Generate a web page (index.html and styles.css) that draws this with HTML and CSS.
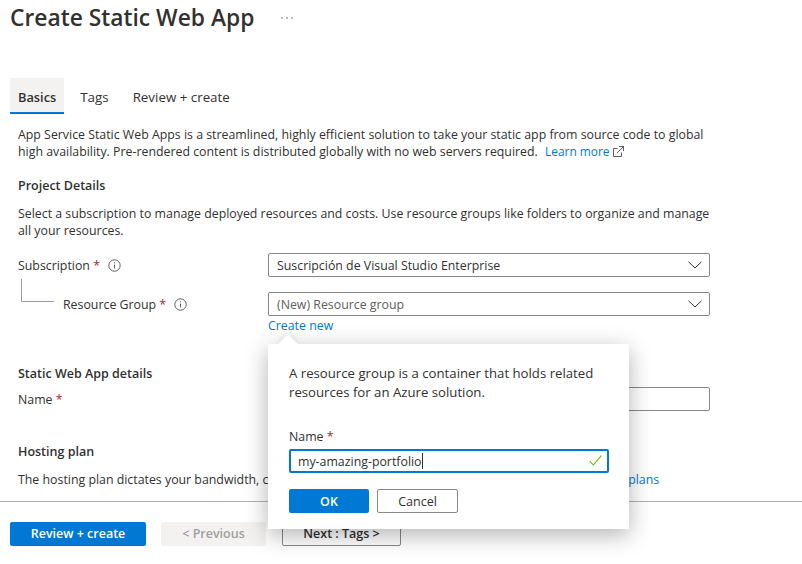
FILE: index.html
```html
<!DOCTYPE html>
<html lang="en">
<head>
    <meta charset="UTF-8">
    <title>Create Static Web App</title>
    <link rel="stylesheet" href="styles.css">
</head>
<body>
    <div class="page">
        <div class="titlebar">
            <h1>Create Static Web App</h1>
            <svg class="more" width="12" height="2" viewBox="0 0 12 2" fill="#605e5c"><circle cx="1" cy="1" r=".8"/><circle cx="6" cy="1" r=".8"/><circle cx="11" cy="1" r=".8"/></svg>
        </div>

        <div class="tabs">
            <div class="tab active">Basics</div>
            <div class="tab">Tags</div>
            <div class="tab">Review + create</div>
        </div>

        <div class="content">
            <p class="intro">App Service Static Web Apps is a streamlined, highly efficient solution to take your static app from source code to global high availability. Pre-rendered content is distributed globally with no web servers required. <a class="link learn" href="#">Learn more</a>
                <svg class="ext" width="11" height="11" viewBox="0 0 11 11" fill="none" stroke="#605e5c" stroke-width="1"><path d="M4.500 2.500H.5v8h8V6.500M6 .5h4.500V5M10.500.5L4 7"/></svg>
            </p>

            <h2 class="h-project">Project Details</h2>
            <p class="desc">Select a subscription to manage deployed resources and costs. Use resource groups like folders to organize and manage all your resources.</p>

            <div class="row row-sub">
                <div class="label">Subscription <span class="req">*</span>
                    <svg class="info" width="13" height="13" viewBox="0 0 13 13" fill="none" stroke="#605e5c"><circle cx="6.5" cy="6.5" r="5.7"/><path d="M6.5 5.6v3.8M6.5 3.4v1"/></svg>
                </div>
                <div class="select">Suscripción de Visual Studio Enterprise
                    <svg class="chev" width="14" height="8" viewBox="0 0 14 8" fill="none" stroke="#323130"><path d="M.5.8L7 7l6.500-6.200"/></svg>
                </div>
            </div>

            <div class="row row-group">
                <div class="label nested">
                    <span class="tree"></span>
                    Resource Group <span class="req">*</span>
                    <svg class="info" width="13" height="13" viewBox="0 0 13 13" fill="none" stroke="#605e5c"><circle cx="6.5" cy="6.5" r="5.700"/><path d="M6.5 5.6v3.8M6.5 3.4v1"/></svg>
                </div>
                <div class="select placeholder">(New) Resource group
                    <svg class="chev" width="14" height="8" viewBox="0 0 14 8" fill="none" stroke="#323130"><path d="M.5.8L7 7l6.500-6.200"/></svg>
                </div>
            </div>
            <div class="create-new"><a class="link" href="#">Create new</a></div>

            <h2 class="h-details">Static Web App details</h2>
            <div class="row row-name">
                <div class="label">Name <span class="req">*</span></div>
                <div class="input"></div>
            </div>

            <h2 class="h-hosting">Hosting plan</h2>
            <p class="hosting">The hosting plan dictates your bandwidth, custom domain, storage, and other capabilities. <a class="link plans" href="#">Compare plans</a></p>
        </div>

        <div class="footer">
            <button class="btn primary wide">Review + create</button>
            <button class="btn disabled">&lt; Previous</button>
            <button class="btn outline next">Next : Tags &gt;</button>
        </div>

        <div class="popup">
            <p>A resource group is a container that holds related resources for an Azure solution.</p>
            <div class="popup-label">Name <span class="req">*</span></div>
            <div class="popup-input">
                <span>my-amazing-portfolio</span><span class="caret"></span>
                <svg class="check" width="13" height="11" viewBox="0 0 13 11" fill="none" stroke="#6bb700" stroke-width="1.100"><path d="M.7 6l3.600 4L12.300.7"/></svg>
            </div>
            <div class="popup-actions">
                <button class="btn primary ok">OK</button>
                <button class="btn outline cancel">Cancel</button>
            </div>
        </div>
    </div>
</body>
</html>
```

FILE: styles.css
```css
* {
    box-sizing: border-box;
}
html, body {
    margin: 0;
    height: 100%;
    overflow: hidden;
    background: #fff;
}
body {
    font-family: "Open Sans", "Noto Sans", sans-serif;
    font-size: 12.35px;
    line-height: 17px;
    color: #323130;
}
.page {
    position: relative;
    width: 802px;
    height: 564px;
    overflow: hidden;
}
.titlebar {
    display: flex;
    align-items: center;
    height: 36px;
    padding-left: 10px;
}
h1 {
    margin: 0;
    font-size: 22.8px;
    font-weight: 600;
    line-height: 36px;
}
.more {
    margin-left: 27px;
}
.tabs {
    display: flex;
    height: 36px;
    margin: 42px 0 0 10px;
}
.tab {
    padding: 0 8px;
    margin-right: 8px;
    line-height: 38px;
    font-size: 13.35px;
}
.tab.active {
    background: #f3f2f1;
    border-bottom: 2px solid #0078d4;
    font-size: 12.8px;
    font-weight: 600;
}
.content {
    padding: 0 92px 0 18px;
}
p {
    margin: 0;
}
.intro {
    margin-top: 12px;
}
.link {
    color: #0078d4;
    text-decoration: none;
}
.learn {
    margin-left: 4px;
    font-size: 11.9px;
}
.ext {
    vertical-align: -1px;
}
h2 {
    margin: 0;
    font-size: 12.5px;
    line-height: 17px;
    font-weight: 600;
}
.h-project {
    margin-top: 17px;
}
.desc {
    margin-top: 11px;
}
.row {
    display: flex;
    align-items: center;
}
.row-sub {
    margin-top: 14px;
}
.row-group {
    margin-top: 15px;
}
.label {
    position: relative;
    width: 250px;
    flex: none;
}
.label.nested {
    padding-left: 45px;
}
.tree {
    position: absolute;
    left: 3px;
    top: -17px;
    width: 33px;
    height: 23px;
    border-left: 1px solid #a19f9d;
    border-bottom: 1px solid #a19f9d;
}
.req {
    color: #a4262c;
}
.info {
    vertical-align: -2px;
    margin-left: 5px;
}
.select, .input {
    display: flex;
    align-items: center;
    justify-content: space-between;
    width: 442px;
    height: 24px;
    padding: 0 7px 0 8px;
    border: 1px solid #8a8886;
    border-radius: 2px;
}
.placeholder {
    color: #605e5c;
}
.create-new {
    margin: 1px 0 0 250px;
    line-height: 18px;
}
.h-details {
    margin-top: 30px;
}
.row-name {
    margin-top: 5px;
}
.h-hosting {
    margin-top: 32px;
}
.hosting {
    margin-top: 11px;
    white-space: nowrap;
}
.plans {
    margin-left: 33px;
}
.footer {
    position: absolute;
    left: 0;
    right: 0;
    top: 501px;
    display: flex;
    gap: 15px;
    padding: 20px 0 0 10px;
    border-top: 1px solid #b3b0ad;
}
.btn {
    height: 24px;
    padding: 0;
    border: 1px solid transparent;
    border-radius: 2px;
    font-family: inherit;
    font-size: 12.5px;
    font-weight: 600;
}
.footer .btn {
    padding-bottom: 2px;
}
.primary {
    background: #0078d4;
    color: #fff;
}
.wide {
    width: 136px;
}
.disabled {
    width: 105px;
    background: #f3f2f1;
    color: #a19f9d;
}
.outline {
    background: #fff;
    border-color: #8a8886;
    color: #323130;
}
.next {
    width: 119px;
    margin-left: 1px;
}
.popup {
    position: absolute;
    left: 268px;
    top: 344px;
    width: 361px;
    height: 185px;
    padding: 20px 20px 20px 21px;
    background: #fff;
    box-shadow: 0 6px 22px rgba(0, 0, 0, 0.3);
}
.popup::before {
    content: "";
    position: absolute;
    left: 13px;
    top: -7px;
    width: 14px;
    height: 14px;
    background: #fff;
    transform: rotate(45deg);
    box-shadow: -2px -2px 5px rgba(0, 0, 0, 0.08);
}
.popup p {
    position: relative;
    font-size: 13.2px;
    line-height: 19px;
}
.popup-label {
    margin-top: 26px;
}
.popup-input {
    display: flex;
    align-items: center;
    position: relative;
    width: 320px;
    height: 24px;
    margin-top: 4px;
    padding-left: 7px;
    border: 2px solid #0078d4;
    border-radius: 2px;
}
.caret {
    width: 1px;
    height: 16px;
    background: #323130;
}
.check {
    position: absolute;
    right: 5px;
    top: 4px;
}
.popup-actions {
    display: flex;
    gap: 8px;
    margin-top: 16px;
}
.ok {
    width: 80px;
}
.cancel {
    width: 81px;
    font-weight: 400;
}
```
